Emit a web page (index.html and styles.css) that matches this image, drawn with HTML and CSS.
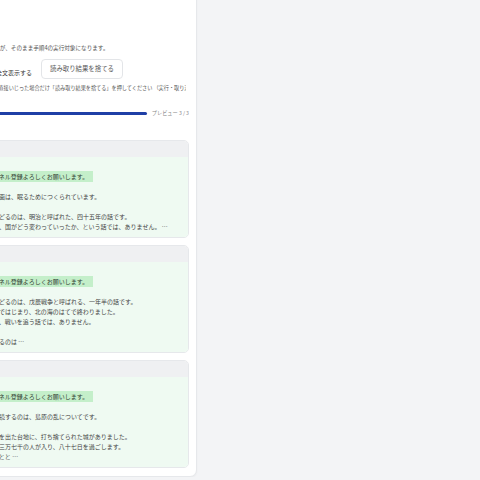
FILE: index.html
```html
<!DOCTYPE html>
<html lang="ja">
  <head>
    <meta charset="UTF-8" />
    <meta name="viewport" content="width=device-width, initial-scale=1.0" />
    <title>読み取りプレビュー</title>
    <link rel="stylesheet" href="styles.css">
  </head>
  <body>
    <div class="panel">
      <p class="note">各項目が、そのまま手順4の実行対象になります。</p>
      <div class="actions">
        <label class="toggle"><input type="checkbox" />全文表示する</label>
        <button type="button" class="discard">読み取り結果を捨てる</button>
      </div>
      <p class="note nowrap">原稿を直接いじった場合だけ「読み取り結果を捨てる」を押してください （実行・取り消しはできません）</p>

      <div class="progress">
        <div class="track"><div class="bar" style="width: 100%"></div></div>
        <span class="count">プレビュー 3 / 3</span>
      </div>

      <div class="card">
        <div class="card-head"></div>
        <div class="card-body">
          <p><mark>チャンネル登録よろしくお願いします。</mark></p>
          <p class="gap">この動画は、眠るためにつくられています。</p>
          <p class="gap">今日たどるのは、明治と呼ばれた、四十五年の話です。</p>
          <p>ただし、国がどう変わっていったか、という話では、ありません。 …</p>
        </div>
      </div>

      <div class="card">
        <div class="card-head"></div>
        <div class="card-body">
          <p><mark>チャンネル登録よろしくお願いします。</mark></p>
          <p class="gap">今日たどるのは、戊辰戦争と呼ばれる、一年半の話です。</p>
          <p>南の都ではじまり、北の海のはてで終わりました。</p>
          <p>けれど、戦いを追う話では、ありません。</p>
          <p class="gap">今夜語るのは …</p>
        </div>
      </div>

      <div class="card">
        <div class="card-head"></div>
        <div class="card-body">
          <p><mark>チャンネル登録よろしくお願いします。</mark></p>
          <p class="gap">今回朗読するのは、島原の乱についてです。</p>
          <p class="gap">城下町を出た台地に、打ち捨てられた城がありました。</p>
          <p>そこに三万七千の人が入り、八十七日を過ごします。</p>
          <p>ひとびとと …</p>
        </div>
      </div>
    </div>
  </body>
</html>
```

FILE: styles.css
```css
* {
  margin: 0;
  padding: 0;
  box-sizing: border-box;
}
body {
  background-color: #f3f4f6;
  font-family: "Noto Sans CJK JP", "Noto Sans", sans-serif;
  color: #444;
  overflow: hidden;
}

.panel {
  width: 227px;
  margin-left: -30px;
  margin-top: -6px;
  padding: 49px 7px 8px 12px;
  background-color: #ffffff;
  border: 1px solid #e6e8eb;
  border-radius: 0 0 7px 0;
  box-shadow: 0 1px 2px rgba(0, 0, 0, 0.04);
}

.note {
  font-size: 5.6px;
  line-height: 8px;
  color: #555;
}
.nowrap {
  font-size: 5.15px;
  white-space: nowrap;
  overflow: hidden;
  margin-top: 5px;
  margin-right: 3px;
}

.actions {
  display: flex;
  align-items: flex-end;
  gap: 9px;
  margin-top: 7px;
}
.toggle {
  display: flex;
  align-items: center;
  gap: 4px;
  font-size: 6px;
  line-height: 8px;
  color: #333;
  margin-bottom: 2px;
}
.toggle input {
  width: 9px;
  height: 9px;
}
.discard {
  font-family: inherit;
  font-size: 6.4px;
  line-height: 18px;
  padding: 0 8px;
  color: #5a5a5a;
  background-color: #fff;
  border: 1px solid #e3e5e8;
  border-radius: 4px;
}

.progress {
  display: flex;
  align-items: center;
  gap: 5px;
  margin-top: 17px;
}
.track {
  flex: 1;
  height: 3px;
  border-radius: 2px;
  background-color: #e5e7eb;
}
.bar {
  height: 3px;
  border-radius: 2px;
  background-color: #1f3fa6;
}
.count {
  font-size: 5.2px;
  line-height: 8px;
  color: #888;
}

.card {
  margin-top: 7px;
  margin-left: -3px;
  border: 1px solid #e6e8eb;
  border-radius: 5px;
  overflow: hidden;
}
.progress + .card {
  margin-top: 23px;
}
.card-head {
  height: 16px;
  background-color: #eff0f2;
}
.card-body {
  background-color: #effaf2;
  padding: 15px 0 5px 0;
  font-size: 6px;
  line-height: 10px;
  color: #444;
  white-space: nowrap;
}
.card-body .gap {
  margin-top: 10px;
}
mark {
  background-color: #c4efca;
  color: #2f3b30;
  padding: 1px 5px 1px 0;
}
```
